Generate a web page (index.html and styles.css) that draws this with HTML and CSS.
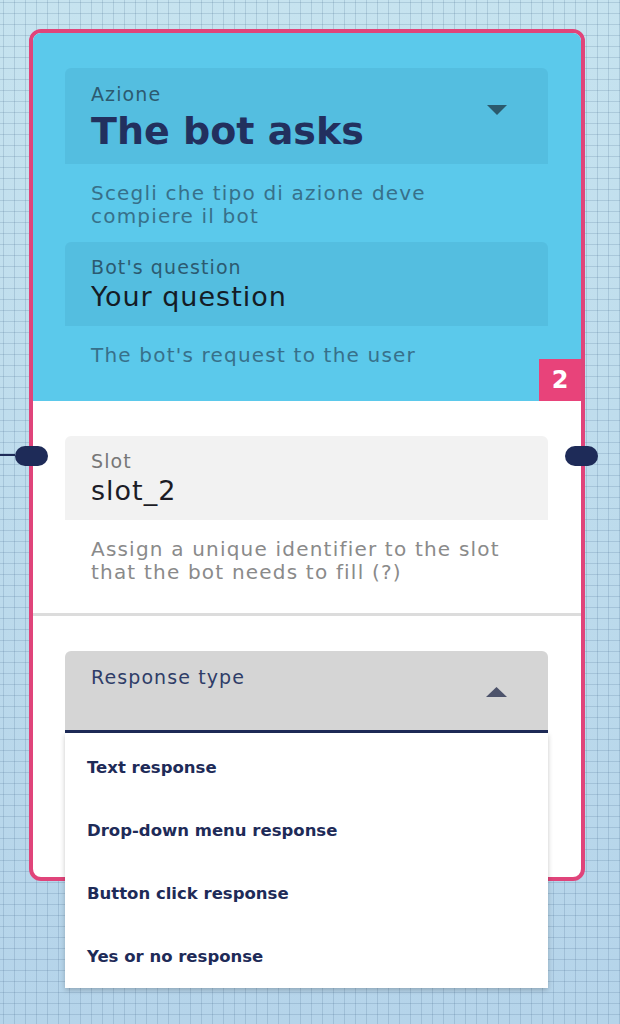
FILE: index.html
```html
<!DOCTYPE html>
<html lang="en">
<head>
    <meta charset="UTF-8">
    <meta name="viewport" content="width=device-width, initial-scale=1.0">
    <title>Bot flow node</title>
    <link rel="stylesheet" href="styles.css">
</head>
<body>
    <div class="canvas">
        <div class="node">
            <section class="node-head">
                <div class="field field-select">
                    <span class="field-label">Azione</span>
                    <span class="field-value field-value-big">The bot asks</span>
                    <svg class="caret" width="20" height="10" viewBox="0 0 20 10"><path d="M0 0H20L10 10Z"/></svg>
                </div>
                <p class="hint">Scegli che tipo di azione deve compiere il bot</p>

                <div class="field">
                    <span class="field-label">Bot's question</span>
                    <span class="field-value">Your question</span>
                </div>
                <p class="hint">The bot's request to the user</p>

                <span class="badge">2</span>
            </section>

            <section class="node-body">
                <span class="port port-in"></span>
                <span class="port port-out"></span>

                <div class="field field-light">
                    <span class="field-label">Slot</span>
                    <span class="field-value">slot_2</span>
                </div>
                <p class="hint">Assign a unique identifier to the slot that the bot needs to fill (?)</p>
            </section>

            <section class="node-foot">
                <div class="field field-open">
                    <span class="field-label">Response type</span>
                    <svg class="caret caret-up" width="21" height="10" viewBox="0 0 21 10"><path d="M0 10H21L10.5 0Z"/></svg>

                    <ul class="menu">
                        <li>Text response</li>
                        <li>Drop-down menu response</li>
                        <li>Button click response</li>
                        <li>Yes or no response</li>
                    </ul>
                </div>
            </section>
        </div>
    </div>
</body>
</html>
```

FILE: styles.css
```css
html, body {
    margin: 0;
    height: 100%;
}

body {
    font-family: "DejaVu Sans", sans-serif;
    background-color: #bedcee;
    background-image:
        linear-gradient(rgba(70, 105, 140, 0.2) 1px, transparent 1px),
        linear-gradient(90deg, rgba(70, 105, 140, 0.2) 1px, transparent 1px),
        linear-gradient(#c6e3ef, #b5d4ea);
    background-size: 11px 11px, 11px 11px, 100% 100%;
    background-position: 3px 2px, 3px 2px, 0 0;
}

.canvas {
    padding: 29px 0 0 29px;
}

.node {
    position: relative;
    width: 556px;
    box-sizing: border-box;
    border: 4px solid #e0447a;
    border-radius: 12px;
    background: #fff;
}

.node-head {
    position: relative;
    padding: 35px 33px 34px 32px;
    background: #5bc9eb;
    border-radius: 8px 8px 0 0;
}

.node-body {
    position: relative;
    padding: 35px 33px 29px 32px;
    border-bottom: 3px solid #dcdcdc;
}

.node-foot {
    padding: 35px 33px 144px 32px;
}

/* text fields */
.field {
    position: relative;
    display: flex;
    flex-direction: column;
    padding: 13px 26px;
    background: rgba(0, 50, 80, 0.07);
    border-radius: 6px 6px 0 0;
}

.field-select {
    padding: 14px 26px 12px;
}

.field-label {
    font-size: 19px;
    line-height: 24px;
    letter-spacing: 1.1px;
    color: #2c5a70;
}

.field-value {
    margin-top: 2px;
    font-size: 27px;
    line-height: 32px;
    letter-spacing: 1px;
    color: #141c26;
}

.field-value-big {
    margin-top: 4px;
    font-size: 38px;
    line-height: 42px;
    font-weight: bold;
    letter-spacing: 0;
    color: #22305e;
}

.field-light {
    background: #f2f2f2;
}

.field-light .field-label {
    color: #777;
}

.field-light .field-value {
    color: #1c1c26;
}

.field-open {
    padding: 14px 26px 41px;
    background: #d5d5d5;
    border-bottom: 3px solid #1e2b58;
}

.field-open .field-label {
    color: #2f3d68;
}

.caret {
    position: absolute;
    right: 41px;
    top: 37px;
    fill: #2b5a6d;
}

.caret-up {
    top: 36px;
    fill: #4d536b;
}

.hint {
    max-width: 420px;
    margin: 18px 26px 14px;
    font-size: 20px;
    line-height: 23px;
    letter-spacing: 1.2px;
    color: #37708a;
}

.node-head .hint:last-of-type {
    margin-bottom: 0;
}

.node-body .hint {
    margin-bottom: 0;
    color: #8a8a8a;
}

.badge {
    position: absolute;
    right: 0;
    bottom: 0;
    width: 42px;
    height: 42px;
    line-height: 42px;
    text-align: center;
    background: #e8437a;
    color: #fff;
    font-size: 24px;
    font-weight: bold;
}

/* connection ports */
.port {
    position: absolute;
    top: 45px;
    width: 33px;
    height: 20px;
    border-radius: 10px;
    background: #1e2b58;
    z-index: 1;
}

.port-in {
    left: -18px;
}

.port-in::before {
    content: "";
    position: absolute;
    right: 100%;
    top: 8px;
    width: 20px;
    height: 2px;
    background: #1e2b58;
}

.port-out {
    right: -17px;
}

/* open dropdown */
.menu {
    position: absolute;
    top: calc(100% + 3px);
    left: 0;
    right: 0;
    z-index: 2;
    margin: 0;
    padding: 3px 0 0;
    list-style: none;
    background: #fff;
    box-shadow: 0 2px 5px rgba(0, 0, 0, 0.22);
}

.menu li {
    height: 63px;
    line-height: 63px;
    padding-left: 22px;
    font-size: 16.5px;
    font-weight: bold;
    color: #1e2b58;
}
```
